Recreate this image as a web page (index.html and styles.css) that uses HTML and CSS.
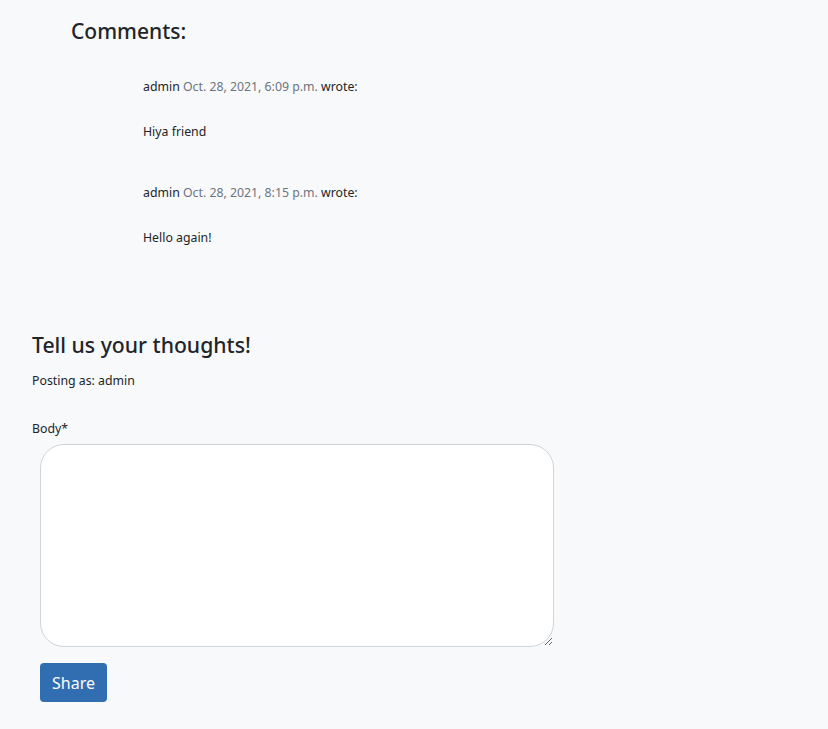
FILE: index.html
```html
<!DOCTYPE html>
<html>
<head>
<meta charset="utf-8">
<link rel="stylesheet" href="styles.css">
</head>
<body>
<main class="page">
  <section class="comments">
    <h4 class="comments-title">Comments:</h4>
    <div class="comment">
      <p class="meta">admin <span class="date">Oct. 28, 2021, 6:09 p.m.</span> wrote:</p>
      <p class="text">Hiya friend</p>
    </div>
    <div class="comment">
      <p class="meta">admin <span class="date">Oct. 28, 2021, 8:15 p.m.</span> wrote:</p>
      <p class="text">Hello again!</p>
    </div>
  </section>
  <section class="form-area">
    <h3 class="form-title">Tell us your thoughts!</h3>
    <p class="posting">Posting as: admin</p>
    <form class="form">
      <label class="label" for="body">Body*</label>
      <textarea id="body" class="textarea"></textarea>
      <button type="button" class="btn">Share</button>
    </form>
  </section>
</main>
</body>
</html>
```
FILE: styles.css
```css
html, body {
  margin: 0;
  padding: 0;
  background: #f8f9fa;
}
body {
  font-family: "Noto Sans", "Open Sans", sans-serif;
  color: #212529;
  font-size: 12.3px;
}
.page {
  padding: 0 0 0 32px;
}
.comments {
  padding: 17px 0 0 39px;
}
.comments-title {
  margin: 0 0 32px;
  font-size: 21px;
  font-weight: 500;
  line-height: 28px;
}
.comment {
  padding-left: 72px;
  margin-bottom: 41px;
}
.meta, .text {
  margin: 0;
  line-height: 20px;
}
.text {
  margin-top: 25px;
}
.date {
  color: #6c757d;
}
.form-area {
  padding-top: 41px;
}
.form-title {
  margin: 0;
  font-size: 21.2px;
  font-weight: 500;
  line-height: 30px;
}
.posting {
  margin: 11px 0 0;
  line-height: 20px;
}
.form {
  display: flex;
  flex-direction: column;
  align-items: flex-start;
  padding-top: 28px;
}
.label {
  line-height: 20px;
}
.textarea {
  box-sizing: border-box;
  margin: 5px 0 0 8px;
  width: 514px;
  height: 203px;
  border: 1px solid #ced4da;
  border-radius: 24px;
  background: #fff;
}
.btn {
  margin: 16px 0 0 8px;
  width: 67px;
  height: 39px;
  border: none;
  border-radius: 4px;
  background: #306db1;
  color: #fff;
  font-family: "Noto Sans", sans-serif;
  font-size: 16px;
}
```
